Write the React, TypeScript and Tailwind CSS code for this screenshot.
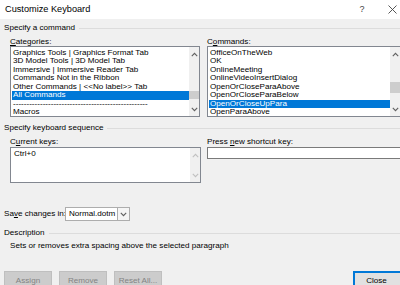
import React from 'react';

const categories = [
  'Graphics Tools | Graphics Format Tab',
  '3D Model Tools | 3D Model Tab',
  'Immersive | Immersive Reader Tab',
  'Commands Not in the Ribbon',
  'Other Commands | <<No label>> Tab',
  'All Commands',
  '--------------------------------------------------',
  'Macros',
];

const commands = [
  'OfficeOnTheWeb',
  'OK',
  'OnlineMeeting',
  'OnlineVideoInsertDialog',
  'OpenOrCloseParaAbove',
  'OpenOrCloseParaBelow',
  'OpenOrCloseUpPara',
  'OpenParaAbove',
];

function Chevron({ up, dim }: { up?: boolean; dim?: boolean }) {
  return (
    <svg width="7" height="5" viewBox="0 0 7 5" className={up ? '' : 'rotate-180'}>
      <path d="M0.8 4.2 L3.5 1.3 L6.2 4.2" fill="none" stroke={dim ? '#c0c0c0' : '#606060'} strokeWidth="1.1" />
    </svg>
  );
}

function ScrollBar({ thumbTop, thumbH, dim }: { thumbTop?: number; thumbH?: number; dim?: boolean }) {
  return (
    <div className="relative w-[10px] shrink-0 bg-[#f0f0f0] flex flex-col items-center justify-between pt-[5px] pb-[4px]">
      <Chevron up dim={dim} />
      {thumbTop !== undefined && (
        <div className="absolute left-0 w-full bg-[#cdcdcd]" style={{ top: thumbTop, height: thumbH }} />
      )}
      <Chevron dim={dim} />
    </div>
  );
}

function ListBox({
  items,
  selected,
  thumbTop,
  thumbH,
  className,
}: {
  items: string[];
  selected: number;
  thumbTop: number;
  thumbH: number;
  className: string;
}) {
  return (
    <div className={`flex h-[71px] border border-[#828790] bg-white ${className}`}>
      <div className="flex-1 min-w-0 pt-[1.5px] pl-[1px] overflow-hidden">
        {items.map((item, i) => (
          <div
            key={i}
            className={`h-[8.5px] leading-[8.5px] pl-[1px] whitespace-nowrap overflow-hidden ${
              i === selected ? 'bg-[#0078d7] text-white' : 'text-black'
            }`}
          >
            {item}
          </div>
        ))}
      </div>
      <ScrollBar thumbTop={thumbTop} thumbH={thumbH} />
    </div>
  );
}

function GroupHeading({ title }: { title: string }) {
  return (
    <div className="flex items-center h-[10px] gap-[4px]">
      <span className="whitespace-nowrap">{title}</span>
      <div className="flex-1 h-px bg-[#dcdcdc]" />
    </div>
  );
}

function DisabledButton({ label }: { label: string }) {
  return (
    <div className="w-[48px] h-[20px] border border-[#bfbfbf] bg-[#cccccc] text-[#838383] flex items-center justify-center whitespace-nowrap">
      {label}
    </div>
  );
}

export default function App() {
  return (
    <div
      className="w-[400px] h-[285px] overflow-hidden bg-[#f0f0f0] text-[8.1px] text-black"
      style={{ fontFamily: '"Liberation Sans", Arial, sans-serif' }}
    >
      <div className="h-[19px] bg-white flex items-center pl-[5px] pr-[3.5px]">
        <span className="text-[9.2px] flex-1">Customize Keyboard</span>
        <span className="w-[10px] text-center text-[9px] text-[#444]">?</span>
        <svg width="9" height="9" viewBox="0 0 9 9" className="ml-[20.5px]">
          <path d="M0.5 0.5 L8.5 8.5 M8.5 0.5 L0.5 8.5" stroke="#444" strokeWidth="0.9" />
        </svg>
      </div>

      <div className="pl-[4px] pt-[4px]">
        <GroupHeading title="Specify a command" />

        <div className="flex pl-[6px] mt-[4px] gap-[7px] w-[420px]">
          <div className="w-[190px]">
            <div className="h-[9px] leading-[9px]"><u>C</u>ategories:</div>
            <ListBox items={categories} selected={5} thumbTop={44} thumbH={8} className="w-[190px]" />
          </div>
          <div className="w-[205px]">
            <div className="h-[9px] leading-[9px]">C<u>o</u>mmands:</div>
            <ListBox items={commands} selected={6} thumbTop={35} thumbH={11} className="w-[194px]" />
          </div>
        </div>

        <div className="mt-[6px]">
          <GroupHeading title="Specify keyboard sequence" />
        </div>

        <div className="flex pl-[6px] mt-[4px] gap-[6px] w-[420px]">
          <div className="w-[191px]">
            <div className="h-[10px] leading-[10px]">C<u>u</u>rrent keys:</div>
            <div className="flex h-[36px] border border-[#828790] bg-white">
              <div className="flex-1 pl-[3px] pt-[1px] leading-[9px]">Ctrl+0</div>
              <ScrollBar dim />
            </div>
          </div>
          <div className="w-[205px]">
            <div className="h-[10px] leading-[10px] whitespace-nowrap">Press <u>n</u>ew shortcut key:</div>
            <div className="h-[12px] border border-[#7a7a7a] bg-white" />
          </div>
        </div>

        <div className="flex items-center mt-[24px] h-[14px]">
          <span className="w-[61px] whitespace-nowrap">Sa<u>v</u>e changes in:</span>
          <div className="flex h-[14px] w-[65px] border border-[#adadad] bg-white">
            <span className="flex-1 pl-[3px] leading-[12px] whitespace-nowrap">Normal.dotm</span>
            <div className="w-[12px] border-l border-[#adadad] bg-[#f5f5f5] flex items-center justify-center">
              <Chevron />
            </div>
          </div>
        </div>

        <div className="mt-[7px]">
          <GroupHeading title="Description" />
        </div>
        <div className="pl-[6px] mt-[3px] h-[10px] leading-[10px] whitespace-nowrap">
          Sets or removes extra spacing above the selected paragraph
        </div>

        <div className="flex items-start mt-[20px]">
          <div className="flex gap-[7px]">
            <DisabledButton label="Assign" />
            <DisabledButton label="Remove" />
            <DisabledButton label="Reset All..." />
          </div>
          <div className="ml-auto -mr-[6px] w-[53px] h-[20px] border-2 border-[#0078d7] bg-[#e1e1e1] flex items-center justify-center">
            <span className="mr-[6px]">Close</span>
          </div>
        </div>
      </div>
    </div>
  );
}
